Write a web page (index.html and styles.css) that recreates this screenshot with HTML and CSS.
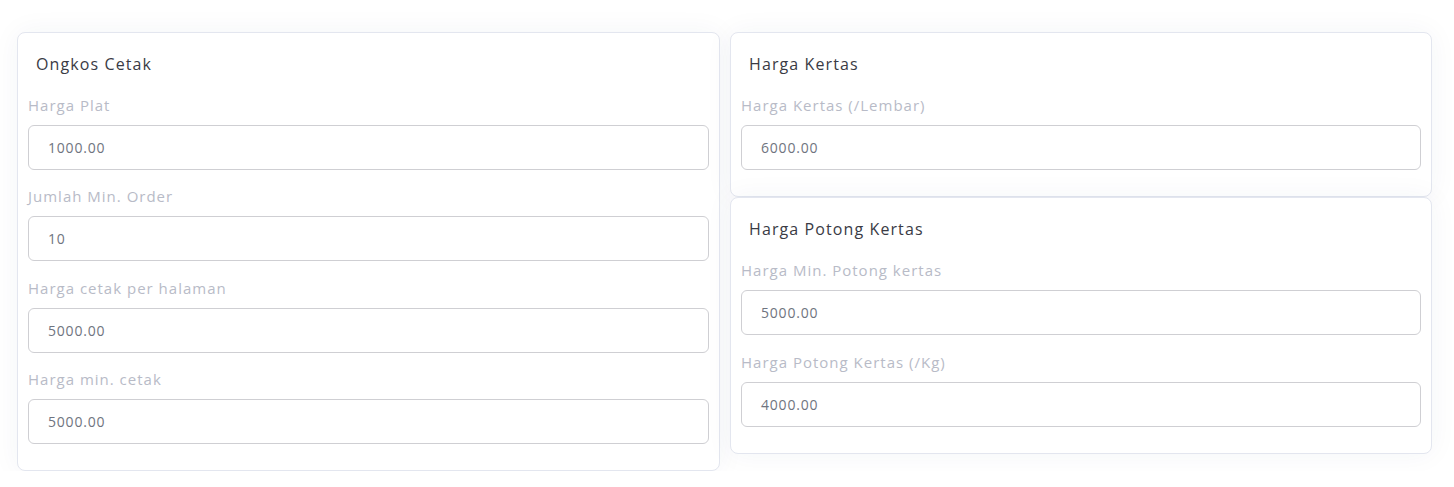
FILE: index.html
```html
<!DOCTYPE html>
<html lang="id">
<head>
<meta charset="utf-8">
<title>Ongkos</title>
<link rel="stylesheet" href="styles.css">
</head>
<body>
<div class="page">
  <div class="col">
    <section class="card">
      <h3 class="card-title">Ongkos Cetak</h3>
      <div class="group">
        <label class="label">Harga Plat</label>
        <div class="input">1000.00</div>
      </div>
      <div class="group">
        <label class="label">Jumlah Min. Order</label>
        <div class="input">10</div>
      </div>
      <div class="group">
        <label class="label">Harga cetak per halaman</label>
        <div class="input">5000.00</div>
      </div>
      <div class="group">
        <label class="label">Harga min. cetak</label>
        <div class="input">5000.00</div>
      </div>
    </section>
  </div>
  <div class="col">
    <section class="card">
      <h3 class="card-title">Harga Kertas</h3>
      <div class="group">
        <label class="label">Harga Kertas (/Lembar)</label>
        <div class="input">6000.00</div>
      </div>
    </section>
    <section class="card">
      <h3 class="card-title">Harga Potong Kertas</h3>
      <div class="group">
        <label class="label">Harga Min. Potong kertas</label>
        <div class="input">5000.00</div>
      </div>
      <div class="group">
        <label class="label">Harga Potong Kertas (/Kg)</label>
        <div class="input">4000.00</div>
      </div>
    </section>
  </div>
</div>
</body>
</html>
```
FILE: styles.css
```css
* { box-sizing: border-box; }
html, body { margin: 0; padding: 0; background: #ffffff; }
body {
  font-family: "Open Sans", "Lato", sans-serif;
  color: #3a3b45;
}
.page {
  display: grid;
  grid-template-columns: 703px 702px;
  column-gap: 10px;
  padding: 32px 0 0 17px;
  align-items: start;
}
.col {
  display: flex;
  flex-direction: column;
}
.card {
  background: #fff;
  border: 1px solid #e3e6ef;
  border-radius: 8px;
  box-shadow: 0 0 28px rgba(40, 50, 90, 0.05);
  padding: 19px 10px 10px 10px;
}
.card-title {
  margin: 0 0 19px 8px;
  font-size: 16px;
  line-height: 24px;
  font-weight: 500;
  letter-spacing: 1.1px;
  color: #3a3b45;
}
.group {
  display: flex;
  flex-direction: column;
  margin-bottom: 16.3px;
}
.label {
  font-size: 15px;
  line-height: 20px;
  letter-spacing: 1px;
  color: #b8bbc7;
  margin-bottom: 10px;
}
.input {
  height: 45px;
  border: 1px solid #cfcfd3;
  border-radius: 6px;
  padding: 0 19px;
  display: flex;
  align-items: center;
  font-size: 14px;
  letter-spacing: 0.8px;
  color: #6f7480;
}
```
